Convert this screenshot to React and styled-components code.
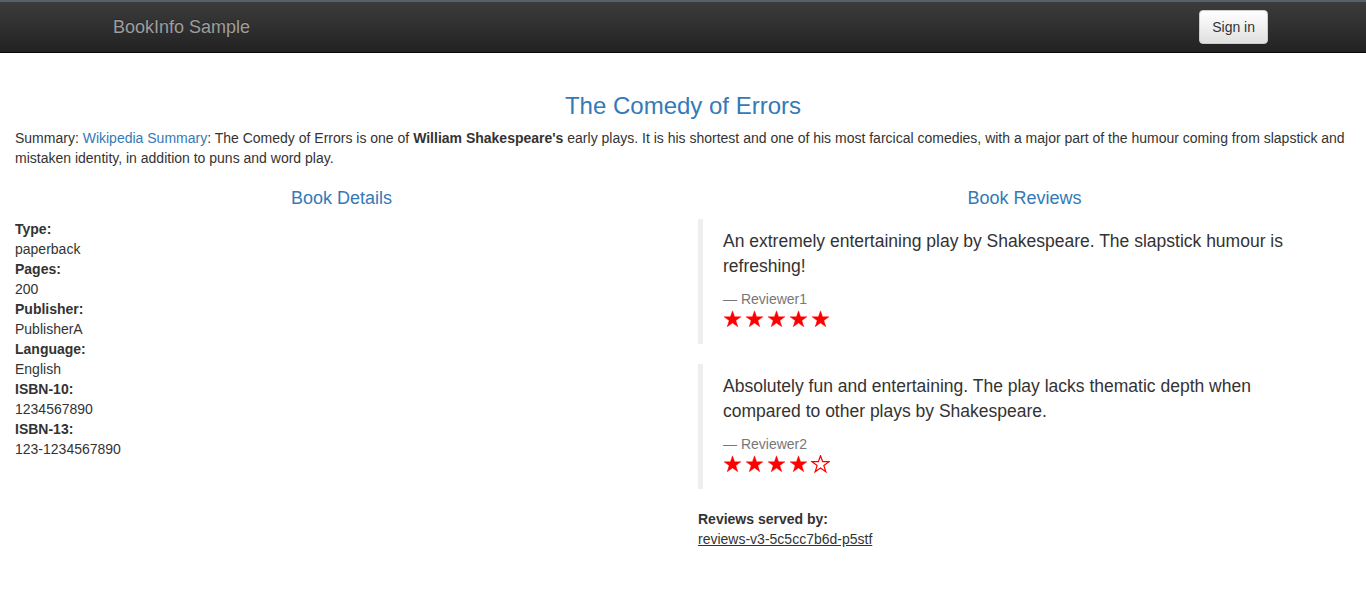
import React from "react";
import styled, { createGlobalStyle } from "styled-components";

const GlobalStyle = createGlobalStyle`
  body {
    margin: 0;
    font-family: "Liberation Sans", Arial, sans-serif;
    font-size: 14px;
    line-height: 1.42857;
    color: #333;
    background: #fff;
  }
  * { box-sizing: border-box; }
`;

const Navbar = styled.nav`
  border-top: 2px solid #56636f;
  border-bottom: 1px solid #080808;
  background-image: linear-gradient(to bottom, #3c3c3c 0%, #222 100%);
  margin-bottom: 20px;
`;
const NavContainer = styled.div`
  width: 1170px;
  margin: 0 auto;
  padding: 0 15px;
  height: 50px;
  display: flex;
  align-items: center;
  justify-content: space-between;
`;
const Brand = styled.a`
  font-size: 18px;
  line-height: 20px;
  padding: 15px 0;
  color: #9d9d9d;
  text-decoration: none;
  text-shadow: 0 -1px 0 rgba(0, 0, 0, 0.25);
`;
const SignIn = styled.button`
  height: 34px;
  margin-right: -15px;
  padding: 6px 12px;
  font-family: inherit;
  font-size: 14px;
  line-height: 20px;
  color: #333;
  border: 1px solid #ccc;
  border-radius: 4px;
  background-image: linear-gradient(to bottom, #fff 0%, #e0e0e0 100%);
  box-shadow: inset 0 1px 0 rgba(255, 255, 255, 0.15), 0 1px 1px rgba(0, 0, 0, 0.075);
  cursor: pointer;
`;

const Page = styled.div`
  display: flow-root;
  padding: 0 15px;
`;
const Title = styled.h3`
  margin: 20px 0 10px;
  font-size: 24px;
  font-weight: 500;
  line-height: 1.1;
  color: #337ab7;
  text-align: center;
`;
const Summary = styled.p`
  margin: 0 0 10px;
  a {
    color: #337ab7;
    text-decoration: none;
  }
`;
const Row = styled.div`
  display: grid;
  grid-template-columns: 1fr 1fr;
  margin: 0 -15px;
`;
const Col = styled.div`
  padding: 0 15px;
`;
const SectionTitle = styled.h4`
  margin: 10px 0 10px;
  font-size: 18px;
  font-weight: 500;
  line-height: 1.1;
  color: #337ab7;
  text-align: center;
`;
const DefList = styled.dl`
  margin: 0 0 20px;
  dt {
    font-weight: bold;
    line-height: 20px;
  }
  dd {
    margin: 0;
    line-height: 20px;
  }
  u {
    color: #333;
  }
`;
const Quote = styled.blockquote`
  margin: 0 0 20px;
  padding: 10px 20px;
  border-left: 5px solid #eee;
  font-size: 17.5px;
  p {
    margin: 0 0 10px;
    line-height: 25px;
  }
`;
const Reviewer = styled.small`
  display: block;
  font-size: 14px;
  line-height: 20px;
  color: #777;
  &:before {
    content: "\\2014 \\00A0";
  }
`;
const Stars = styled.div`
  display: flex;
  gap: 3px;
  height: 25px;
  align-items: flex-start;
  padding-top: 1px;
`;

const Star = ({ filled }) => (
  <svg width="19" height="18" viewBox="0 0 24 23">
    <polygon
      points="12,1 14.7,8.6 22.9,8.6 16.3,13.5 18.8,21.4 12,16.6 5.2,21.4 7.7,13.5 1.1,8.6 9.3,8.6"
      fill={filled ? "#ff0000" : "#fff"}
      stroke="#ff0000"
      strokeWidth={filled ? 0.5 : 1.6}
      strokeLinejoin="miter"
    />
  </svg>
);

const details = [
  ["Type:", "paperback"],
  ["Pages:", "200"],
  ["Publisher:", "PublisherA"],
  ["Language:", "English"],
  ["ISBN-10:", "1234567890"],
  ["ISBN-13:", "123-1234567890"],
];

const reviews = [
  {
    text: "An extremely entertaining play by Shakespeare. The slapstick humour is refreshing!",
    reviewer: "Reviewer1",
    rating: 5,
  },
  {
    text: "Absolutely fun and entertaining. The play lacks thematic depth when compared to other plays by Shakespeare.",
    reviewer: "Reviewer2",
    rating: 4,
  },
];

const App = () => {
  return (
    <>
      <GlobalStyle />
      <Navbar>
        <NavContainer>
          <Brand href="#">BookInfo Sample</Brand>
          <SignIn>Sign in</SignIn>
        </NavContainer>
      </Navbar>
      <Page>
        <Title>The Comedy of Errors</Title>
        <Summary>
          Summary: <a href="#">Wikipedia Summary</a>: The Comedy of Errors is one
          of <b>William Shakespeare's</b> early plays. It is his shortest and one
          of his most farcical comedies, with a major part of the humour coming
          from slapstick and mistaken identity, in addition to puns and word play.
        </Summary>
        <Row>
          <Col>
            <SectionTitle>Book Details</SectionTitle>
            <DefList>
              {details.map(([label, value]) => (
                <React.Fragment key={label}>
                  <dt>{label}</dt>
                  <dd>{value}</dd>
                </React.Fragment>
              ))}
            </DefList>
          </Col>
          <Col>
            <SectionTitle>Book Reviews</SectionTitle>
            {reviews.map((review, index) => (
              <Quote key={index}>
                <p>{review.text}</p>
                <Reviewer>{review.reviewer}</Reviewer>
                <Stars>
                  {[0, 1, 2, 3, 4].map((i) => (
                    <Star key={i} filled={i < review.rating} />
                  ))}
                </Stars>
              </Quote>
            ))}
            <DefList>
              <dt>Reviews served by:</dt>
              <dd>
                <u>reviews-v3-5c5cc7b6d-p5stf</u>
              </dd>
            </DefList>
          </Col>
        </Row>
      </Page>
    </>
  );
};

export default App;
